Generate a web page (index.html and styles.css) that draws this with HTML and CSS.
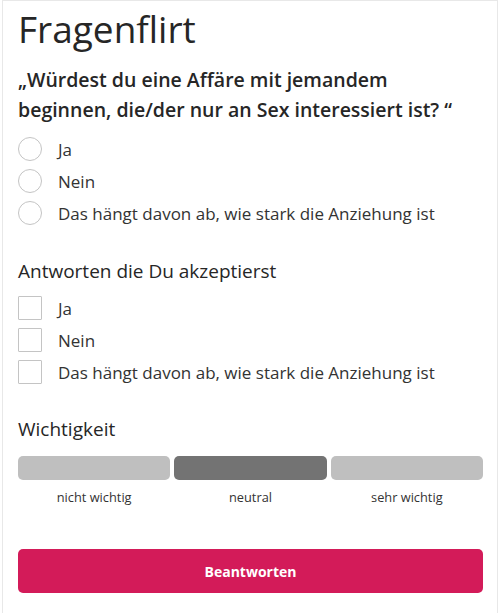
FILE: index.html
```html
<!DOCTYPE html>
<html lang="de">
<head>
  <meta charset="UTF-8">
  <meta name="viewport" content="width=device-width, initial-scale=1.0">
  <title>Fragenflirt</title>
  <link rel="stylesheet" href="styles.css">
</head>
<body>
  <div class="card">
    <h1 class="title">Fragenflirt</h1>
    <p class="question">„Würdest du eine Affäre mit jemandem beginnen, die/der nur an Sex interessiert ist? “</p>

    <div class="options">
      <label class="option"><span class="radio"></span>Ja</label>
      <label class="option"><span class="radio"></span>Nein</label>
      <label class="option"><span class="radio"></span>Das hängt davon ab, wie stark die Anziehung ist</label>
    </div>

    <h2 class="section-title">Antworten die Du akzeptierst</h2>
    <div class="options">
      <label class="option"><span class="check"></span>Ja</label>
      <label class="option"><span class="check"></span>Nein</label>
      <label class="option"><span class="check"></span>Das hängt davon ab, wie stark die Anziehung ist</label>
    </div>

    <h2 class="section-title importance-title">Wichtigkeit</h2>
    <div class="importance">
      <div class="level">
        <div class="bar"></div>
        <span class="level-label">nicht wichtig</span>
      </div>
      <div class="level">
        <div class="bar active"></div>
        <span class="level-label">neutral</span>
      </div>
      <div class="level">
        <div class="bar"></div>
        <span class="level-label">sehr wichtig</span>
      </div>
    </div>

    <button class="submit">Beantworten</button>
  </div>
</body>
</html>
```

FILE: styles.css
```css
body {
  margin: 0;
  font-family: "Open Sans", Arial, sans-serif;
  background-color: #fff;
  color: #333;
}
.card {
  width: 496px;
  height: 613px;
  box-sizing: border-box;
  margin: 0 auto;
  padding: 6px 14px 0 15px;
  border: 1px solid #e8e8e8;
  border-bottom: none;
}
.title {
  margin: 0;
  font-size: 37px;
  font-weight: 400;
  line-height: 44px;
  color: #262626;
}
.question {
  margin: 14px 20px 12px 0;
  font-size: 19.5px;
  font-weight: 600;
  line-height: 30px;
  color: #262626;
}
.options {
  display: flex;
  flex-direction: column;
  gap: 8px;
}
.option {
  display: flex;
  align-items: center;
  gap: 16px;
  height: 24px;
  font-size: 17px;
  color: #333;
}
.radio,
.check {
  width: 22px;
  height: 22px;
  border: 1px solid #c4c4c4;
  flex-shrink: 0;
}
.radio {
  border-radius: 50%;
}
.check {
  border-radius: 1px;
}
.section-title {
  margin: 33px 0 12px;
  font-size: 19px;
  font-weight: 400;
  line-height: 26px;
  color: #262626;
}
.importance-title {
  margin-top: 32px;
  margin-bottom: 14px;
}
.importance {
  display: flex;
  gap: 4px;
}
.level {
  flex: 1;
  display: flex;
  flex-direction: column;
  align-items: center;
  gap: 8px;
}
.bar {
  width: 100%;
  height: 24px;
  border-radius: 5px;
  background-color: #bfbfbf;
}
.bar.active {
  background-color: #737373;
}
.level-label {
  font-size: 12.8px;
  color: #333;
}
.submit {
  display: block;
  width: 100%;
  height: 44px;
  margin-top: 43px;
  border: none;
  border-radius: 5px;
  background-color: #d31b59;
  color: #fff;
  font-family: "Open Sans", Arial, sans-serif;
  font-size: 14px;
  font-weight: 700;
}
```
